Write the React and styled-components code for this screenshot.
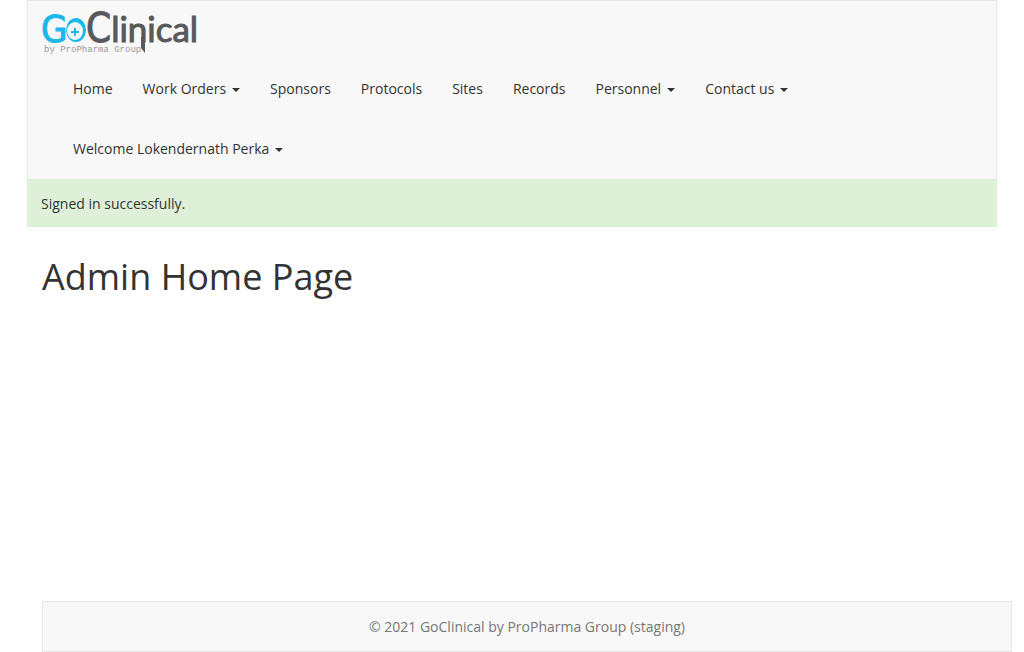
import React from 'react';
import styled, { createGlobalStyle } from 'styled-components';

const GlobalStyle = createGlobalStyle`
  *, *::before, *::after { box-sizing: border-box; }
  body {
    margin: 0;
    background: #fff;
    color: #333;
    font-family: "Open Sans", "Helvetica Neue", Helvetica, Arial, sans-serif;
    font-size: 14px;
    line-height: 20px;
  }
`;

const Page = styled.div`
  display: flex;
  flex-direction: column;
  min-height: 100vh;
`;

const Container = styled.div`
  width: 100%;
  max-width: 970px;
  margin: 0 auto;
  flex: 1;
  display: flex;
  flex-direction: column;
`;

const Navbar = styled.header`
  background: #f8f8f8;
  border: 1px solid #e7e7e7;
  border-bottom: 0;
`;

const Brand = styled.a`
  display: block;
  width: 156px;
  margin: 4px 0 0 14px;
  svg { display: block; overflow: visible; }
`;

const Menu = styled.ul`
  display: flex;
  flex-wrap: wrap;
  list-style: none;
  margin: 0;
  padding: 0 30px;
`;

const MenuItem = styled.li`
  display: flex;
`;

const MenuLink = styled.a`
  display: flex;
  align-items: center;
  gap: 6px;
  padding: 20px 15px;
  color: #333;
  text-decoration: none;
`;

const Caret = styled.span`
  margin-top: 2px;
  border-top: 4px solid currentColor;
  border-left: 4px solid transparent;
  border-right: 4px solid transparent;
`;

const Notice = styled.div`
  background: #dff0d8;
  padding: 15px 14px 13px;
`;

const Main = styled.main`
  flex: 1;
  padding: 30px 15px;
`;

const Title = styled.h1`
  margin: 0;
  font-size: 36px;
  font-weight: 400;
  line-height: 40px;
`;

const Footer = styled.footer`
  margin: 0 -15px 0 15px;
  padding: 15px 15px 14px;
  background: #f8f8f8;
  border: 1px solid #e7e7e7;
  color: #777;
  text-align: center;
`;

const LogoText = styled.text`
  font-family: "DejaVu Sans Condensed", "DejaVu Sans", sans-serif;
  font-size: ${(p) => p.$size}px;
  fill: ${(p) => p.$color};
  stroke: ${(p) => p.$color};
  stroke-width: 1px;
`;

const LogoTail = styled.tspan`
  font-family: Lato, sans-serif;
  font-size: 35px;
`;

const Tagline = styled.text`
  font-family: "Liberation Mono", monospace;
  font-size: 9px;
  fill: #999;
`;

function Logo() {
  return (
    <svg width="156" height="54" viewBox="0 0 156 54" role="img" aria-label="GoClinical by ProPharma Group">
      <LogoText x="-1" y="37" $size={38} $color="#1ab7ea">G</LogoText>
      <ellipse cx="34" cy="25" rx="10" ry="12" fill="#1ab7ea" />
      <ellipse cx="33" cy="26" rx="8" ry="9" fill="#f8f8f8" />
      <path d="M33 23v8M29 27h8" stroke="#1ab7ea" strokeWidth="2" />
      <LogoText x="44" y="37" $size={40} $color="#58595b">C<LogoTail>linical</LogoTail></LogoText>
      <path d="M99 32h4v16l-4-5z" fill="#58595b" />
      <Tagline x="2" y="47">by ProPharma Group</Tagline>
    </svg>
  );
}

const links = [
  { label: 'Home' },
  { label: 'Work Orders', menu: true },
  { label: 'Sponsors' },
  { label: 'Protocols' },
  { label: 'Sites' },
  { label: 'Records' },
  { label: 'Personnel', menu: true },
  { label: 'Contact us', menu: true },
];

function NavItem({ label, menu }) {
  return (
    <MenuItem>
      <MenuLink href="#">
        {label}
        {menu && <Caret />}
      </MenuLink>
    </MenuItem>
  );
}

export default function App() {
  return (
    <>
      <GlobalStyle />
      <Page>
        <Container>
          <Navbar>
            <Brand href="#"><Logo /></Brand>
            <nav>
              <Menu>
                {links.map((l) => <NavItem key={l.label} {...l} />)}
              </Menu>
              <Menu>
                <NavItem label="Welcome Lokendernath Perka" menu />
              </Menu>
            </nav>
          </Navbar>
          <Notice role="status">Signed in successfully.</Notice>
          <Main>
            <Title>Admin Home Page</Title>
          </Main>
          <Footer>© 2021 GoClinical by ProPharma Group (staging)</Footer>
        </Container>
      </Page>
    </>
  );
}
